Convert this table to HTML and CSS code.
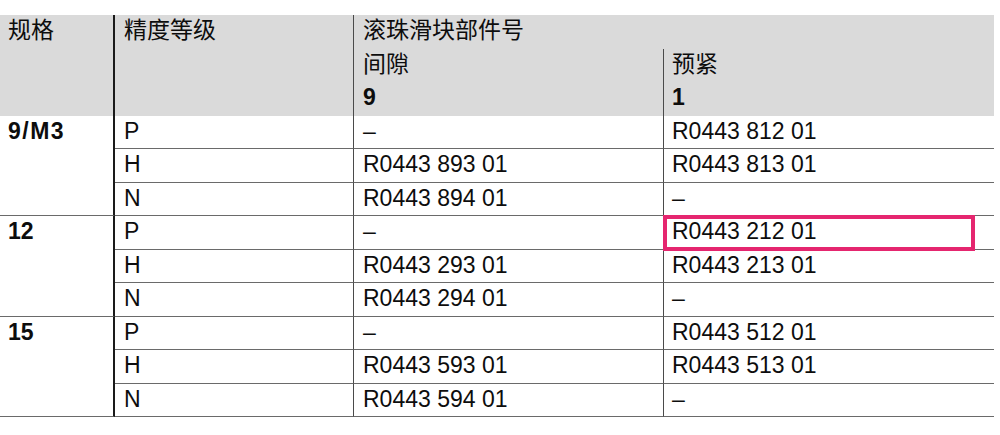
FILE: index.html
```html
<!DOCTYPE html>
<html lang="zh-CN">
<head>
<meta charset="utf-8">
<link rel="stylesheet" href="styles.css">
</head>
<body>
<div class="sheet">
  <div class="grid">
    <div class="c h c1 span3">规格</div>
    <div class="c h c2 span3">精度等级</div>
    <div class="c h c3 wide">滚珠滑块部件号</div>
    <div class="c h c3">间隙</div>
    <div class="c h c4">预紧</div>
    <div class="c h c3 b">9</div>
    <div class="c h c4 b">1</div>

    <div class="c c1 span3 b g spaced">9/M3</div>
    <div class="c c2 r">P</div><div class="c c3 r">–</div><div class="c c4 r">R0443 812 01</div>
    <div class="c c2 r">H</div><div class="c c3 r">R0443 893 01</div><div class="c c4 r">R0443 813 01</div>
    <div class="c c2 r">N</div><div class="c c3 r">R0443 894 01</div><div class="c c4 r">–</div>

    <div class="c c1 span3 b g">12</div>
    <div class="c c2 r">P</div><div class="c c3 r">–</div><div class="c c4 r mark">R0443 212 01<span class="hl"></span></div>
    <div class="c c2 r">H</div><div class="c c3 r">R0443 293 01</div><div class="c c4 r">R0443 213 01</div>
    <div class="c c2 r">N</div><div class="c c3 r">R0443 294 01</div><div class="c c4 r">–</div>

    <div class="c c1 span3 b g">15</div>
    <div class="c c2 r">P</div><div class="c c3 r">–</div><div class="c c4 r">R0443 512 01</div>
    <div class="c c2 r">H</div><div class="c c3 r">R0443 593 01</div><div class="c c4 r">R0443 513 01</div>
    <div class="c c2 r">N</div><div class="c c3 r">R0443 594 01</div><div class="c c4 r">–</div>
  </div>
</div>
</body>
</html>
```
FILE: styles.css
```css
html, body {
  margin: 0;
  padding: 0;
  background: #ffffff;
}

.sheet {
  padding-top: 15px;
  font-family: "Liberation Sans", "Noto Sans CJK SC", sans-serif;
  font-size: 23px;
  color: #0d0d0d;
}

.grid {
  display: grid;
  width: 994px;
  grid-template-columns: 115px 238px 310px 331px;
  grid-template-rows: repeat(12, 33.5px);
  grid-auto-flow: row;
}

.c {
  box-sizing: border-box;
  padding-left: 8px;
  line-height: 31px;
  white-space: nowrap;
}

.h {
  background: #dadada;
}

.c1 {
  grid-column: 1;
  border-right: 2px solid #1a1a1a;
}

.c2 {
  grid-column: 2;
  padding-left: 9px;
}

.c3 {
  grid-column: 3;
  border-left: 1px solid #4a4a4a;
  padding-left: 9px;
}

.c4 {
  grid-column: 4;
  border-left: 1px solid #4a4a4a;
  padding-left: 8px;
}

.wide {
  grid-column: 3 / span 2;
}

.span3 {
  grid-row: span 3;
}

.b {
  font-weight: bold;
}

.spaced {
  letter-spacing: 1.5px;
}

.r,
.g {
  border-bottom: 1px solid #6a6a6a;
}

.mark {
  position: relative;
}

.hl {
  position: absolute;
  left: -1px;
  top: -1px;
  width: 312px;
  height: 36px;
  box-sizing: border-box;
  border: 4px solid #e5266f;
}
```
